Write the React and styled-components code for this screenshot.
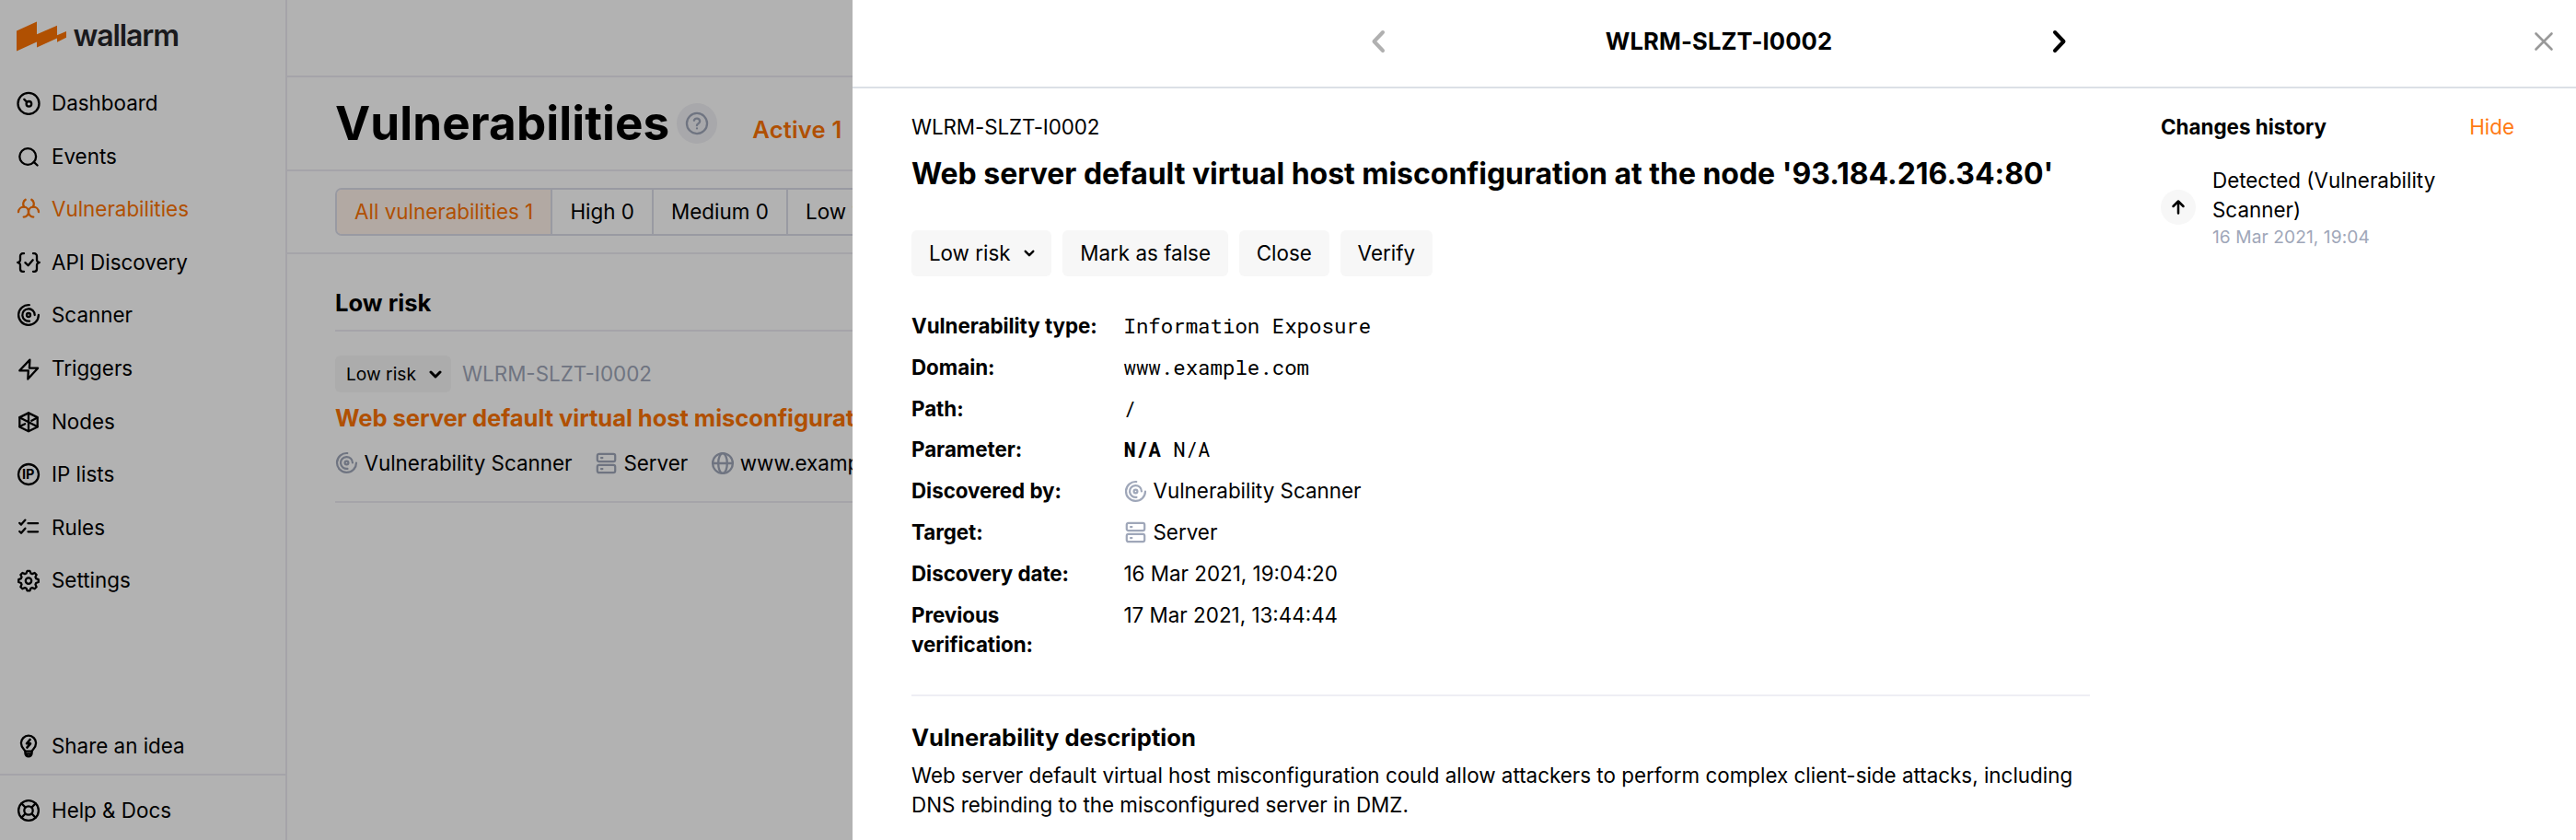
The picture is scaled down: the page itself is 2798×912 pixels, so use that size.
import React from "react";
import styled, { createGlobalStyle } from "styled-components";

const GlobalStyle = createGlobalStyle`
  *, *::before, *::after { box-sizing: border-box; }
  html, body { margin: 0; padding: 0; background: #fff; overflow: hidden; }
  body { font-family: Inter, "Liberation Sans", sans-serif; font-size: 22.4px; line-height: 32px; color: #000; }
  h1, h2, h3, p, dl, dt, dd { margin: 0; }
  button { font: inherit; color: inherit; border: 0; background: none; padding: 0; }
`;

const ORANGE = "#fc7303";
const MUTED = "#9fa7b9";
const LINE = "#ecebf3";

/* ---------- Icons ---------- */

const Svg = styled.svg`
  display: block;
  flex: none;
  width: ${(p) => p.$w || 26}px;
  height: ${(p) => p.$h || p.$w || 26}px;
  color: ${(p) => p.$color || "inherit"};
  fill: none;
  stroke: currentColor;
  stroke-width: ${(p) => p.$stroke || 2.3};
  stroke-linecap: round;
  stroke-linejoin: round;
`;

const BadgeText = styled.text`
  font: 700 14.5px Inter, sans-serif;
  fill: currentColor;
  stroke: none;
`;

const DashboardIcon = () => (
  <Svg viewBox="0 0 26 26">
    <circle cx="13" cy="13.4" r="11.5" />
    <circle cx="13.4" cy="13.8" r="2.8" />
    <path d="M8.3 8.9l2.8 2.8" />
  </Svg>
);
const SearchIcon = () => (
  <Svg viewBox="0 0 26 26">
    <circle cx="12.2" cy="13" r="8.9" />
    <path d="M18.7 18.9l3.9 3.6" />
  </Svg>
);
const BiohazardIcon = () => (
  <Svg viewBox="0 0 26 26">
    <path d="M9.7 2.8A5.5 5.5 0 0 0 8.2 10.6M16.3 2.8A5.5 5.5 0 0 1 17.8 10.6" />
    <path d="M2 16.2A5.8 5.8 0 0 1 7.8 10.7C10.8 10.7 13 13.2 13 16.2S15.500 21.600 18.300 21.600" />
    <path d="M24 16.2A5.8 5.8 0 0 0 18.2 10.7C15.2 10.7 13 13.2 13 16.2S10.500 21.600 7.700 21.600" />
  </Svg>
);
const ApiIcon = () => (
  <Svg viewBox="0 0 26 26">
    <path d="M8 3.2H6.8a2.8 2.8 0 0 0-2.8 2.8v4A2.9 2.9 0 0 1 1.2 13 2.9 2.9 0 0 1 4 16v4a2.8 2.8 0 0 0 2.8 2.8H8" />
    <path d="M18 3.2h1.2A2.8 2.8 0 0 1 22 6v4a2.9 2.9 0 0 0 2.8 3A2.9 2.9 0 0 0 22 16v4a2.8 2.8 0 0 1-2.8 2.8H18" />
    <path d="M9.4 13.1l3.2 3.2 5.1-6" />
  </Svg>
);
const ScannerIcon = ({ color, size }) => (
  <Svg viewBox="0 0 26 26" $color={color} $w={size}>
    <path d="M13.8 2.1A10.9 10.9 0 1 0 23.9 13" />
    <path d="M14 19.6A6.7 6.7 0 1 1 19.7 13" />
    <circle cx="13" cy="13" r="2" />
  </Svg>
);
const BoltIcon = () => (
  <Svg viewBox="0 0 26 26">
    <path d="M14.4 3.6L3.3 15.3H12.8L12.3 24.6 23.1 12.7H13.9Z" />
  </Svg>
);
const NodesIcon = () => (
  <Svg viewBox="0 0 26 26">
    <path d="M13 3.4l9.7 4.7v10.4L13 23.2l-9.7-4.7V8.1z" />
    <path d="M13 3.4v19.8M3.3 8.3l19.4 9.9M3.5 18.1l5.6-2.9M22.5 8.5l-6.2 3.2" />
  </Svg>
);
const IpIcon = () => (
  <Svg viewBox="0 0 26 26">
    <circle cx="13" cy="13" r="11" />
    <BadgeText x="5.9" y="18.3">IP</BadgeText>
  </Svg>
);
const RulesIcon = () => (
  <Svg viewBox="0 0 26 26">
    <path d="M12.5 8.2h10.6M12.5 17.3h10.6M3.2 7.9l1.8 1.7 4.4-5M3.2 17l1.8 1.7 4.4-5" />
  </Svg>
);

const gearPath = (() => {
  const pts = [];
  for (let i = 0; i < 8; i += 1) {
    const a = (i * Math.PI) / 4;
    [[-0.29, 8.5], [-0.13, 10.9], [0.13, 10.9], [0.29, 8.5]].forEach(([d, r]) => {
      pts.push(`${(13 + r * Math.sin(a + d)).toFixed(2)} ${(13.6 - r * Math.cos(a + d)).toFixed(2)}`);
    });
  }
  return `M${pts.join("L")}Z`;
})();
const SettingsIcon = () => (
  <Svg viewBox="0 0 26 26">
    <path d={gearPath} />
    <circle cx="13" cy="13.6" r="3.2" />
  </Svg>
);
const IdeaIcon = () => (
  <Svg viewBox="0 0 26 26">
    <path d="M9.4 18.6C8.8 16.8 4.9 14.8 4.9 9.8a8.1 8.1 0 0 1 16.2 0c0 5-3.9 7-4.5 8.8z" />
    <path d="M9.4 18.6v2.2a3.6 3.6 0 0 0 7.2 0v-2.2M10 21.5h6" />
    <path d="M14.6 6L11 10.3h4L11.4 14.6" strokeWidth="2.6" />
  </Svg>
);
const BuoyIcon = () => (
  <Svg viewBox="0 0 26 26">
    <circle cx="13" cy="13" r="10.9" />
    <circle cx="13" cy="13" r="4.7" />
    <path d="M5.3 5.3l4.3 4.3M16.4 9.6l4.3-4.3M16.4 16.4l4.3 4.3M9.6 16.4l-4.3 4.3" />
  </Svg>
);
const QuestionIcon = () => (
  <Svg viewBox="0 0 24 24" $w={26} $stroke={2.1} $color={MUTED}>
    <circle cx="12" cy="12" r="10.2" />
    <path d="M9.09 9a3 3 0 0 1 5.83 1c0 2-3 2.6-3 4M12 17h.01" />
  </Svg>
);
const ServerIcon = ({ size }) => (
  <Svg viewBox="0 0 26 26" $w={size} $color={MUTED}>
    <rect x="2.9" y="2.9" width="20.2" height="8.6" rx="2" />
    <rect x="2.9" y="15.5" width="20.2" height="8.6" rx="2" />
    <path d="M7.3 7.3h1.4M7.3 19.8h1.4" />
  </Svg>
);
const GlobeIcon = () => (
  <Svg viewBox="0 0 26 26" $w={26} $color={MUTED}>
    <circle cx="13" cy="13" r="10.9" />
    <ellipse cx="13" cy="13" rx="4.8" ry="10.9" />
    <path d="M2.1 13h21.8" />
  </Svg>
);
const ChevronDown = ({ w, h, stroke }) => (
  <Svg viewBox="0 0 14 9" $w={w} $h={h} $stroke={stroke}>
    <path d="M2 2l5 5 5-5" />
  </Svg>
);
const Chevron = ({ right }) => (
  <Svg viewBox="0 0 16 26" $w={16} $h={26} $stroke={4} $color={right ? "#000" : "#b0b0b0"}>
    <path d={right ? "M3 3l9.5 10L3 23" : "M13 3L3.5 13 13 23"} />
  </Svg>
);
const CloseIcon = () => (
  <Svg viewBox="0 0 22 22" $w={22} $stroke={2.6} $color="#999">
    <path d="M2.5 2.5l17 17M19.5 2.5l-17 17" />
  </Svg>
);
const ArrowUp = () => (
  <Svg viewBox="0 0 18 18" $w={18} $stroke={2.5}>
    <path d="M9 15.5V2.5M3.5 8L9 2.5 14.5 8" />
  </Svg>
);
const LogoMark = styled.svg`
  display: block;
  width: 54px;
  height: 33px;
  fill: ${ORANGE};
`;

/* ---------- Page frame ---------- */

const Page = styled.div`
  position: relative;
  display: flex;
  width: 2798px;
  height: 912px;
  overflow: hidden;
`;
const Backdrop = styled.div`
  position: absolute;
  inset: 0;
  display: flex;
  justify-content: flex-end;
  background: rgba(0, 0, 0, 0.3);
`;

/* ---------- Sidebar ---------- */

const Sidebar = styled.nav`
  display: flex;
  flex-direction: column;
  flex: none;
  width: 312px;
  border-right: 2px solid ${LINE};
`;
const Logo = styled.div`
  display: flex;
  gap: 7.5px;
  height: 83.2px;
  padding: 22.5px 0 0 18px;
`;
const LogoWord = styled.span`
  font-size: 32px;
  font-weight: 600;
  line-height: 32px;
  letter-spacing: -1.1px;
  color: #26262a;
`;
const NavItem = styled.a`
  display: flex;
  align-items: center;
  gap: 12px;
  flex: none;
  height: ${(p) => p.$h || 57.6}px;
  padding-left: 18px;
  color: ${(p) => (p.$active ? ORANGE : "#000")};
`;
const NavFooter = styled.div`
  margin-top: auto;
`;
const FooterCell = styled.div`
  display: flex;
  height: ${(p) => p.$h}px;
  border-top: ${(p) => (p.$line ? `2px solid ${LINE}` : "0")};
`;

/* ---------- Main list ---------- */

const Main = styled.main`
  display: flex;
  flex-direction: column;
  flex: none;
  width: 614px;
  overflow: hidden;
`;
const TopBar = styled.div`
  flex: none;
  height: 84px;
  border-bottom: 2px solid ${LINE};
`;
const TitleBar = styled.header`
  display: flex;
  align-items: center;
  flex: none;
  height: 102px;
  padding-left: 52px;
  border-bottom: 2px solid ${LINE};
  white-space: nowrap;
`;
const PageTitle = styled.h1`
  margin-bottom: 2px;
  font-size: 51.2px;
  line-height: 60px;
  font-weight: 700;
  letter-spacing: 0.1px;
`;
const HelpBadge = styled.span`
  display: grid;
  place-items: center;
  flex: none;
  width: 44px;
  height: 44px;
  margin-left: 8px;
  border-radius: 50%;
  background: #f1f1f5;
`;
const StatusTab = styled.span`
  margin: 13px 0 0 38px;
  font-size: 25.6px;
  font-weight: 600;
  letter-spacing: 0.15px;
  color: ${ORANGE};
`;
const FilterBar = styled.div`
  display: flex;
  align-items: center;
  flex: none;
  height: 90px;
  padding-left: 52px;
  border-bottom: 2px solid ${LINE};
`;
const Segments = styled.div`
  display: flex;
  flex: none;
  height: 52px;
  border: 2px solid #dbdde8;
  border-radius: 7px;
  overflow: hidden;
  white-space: nowrap;
`;
const Segment = styled.button`
  padding: 0 19.1px;
  border-right: 2px solid #dbdde8;
  color: ${(p) => (p.$active ? ORANGE : "#000")};
  background: ${(p) => (p.$active ? "#fff2ea" : "transparent")};
  &:last-child { border-right: 0; }
`;
const List = styled.section`
  padding: 36px 0 0 52px;
`;
const GroupTitle = styled.h2`
  height: 48px;
  font-size: 25.6px;
  line-height: 34px;
  font-weight: 700;
  border-bottom: 2px solid ${LINE};
`;
const Card = styled.article`
  display: flex;
  flex-direction: column;
  height: 186px;
  padding-top: 26px;
  border-bottom: 2px solid ${LINE};
`;
const CardTop = styled.div`
  display: flex;
  align-items: center;
  gap: 12px;
  color: ${MUTED};
`;
const RiskPill = styled.button`
  display: flex;
  align-items: center;
  gap: 14px;
  width: 126px;
  height: 40px;
  padding-left: 12px;
  border-radius: 6px;
  font-size: 19.2px;
  color: #000;
  background: #f6f6f6;
`;
const CardTitle = styled.h3`
  margin-top: 10px;
  font-size: 25.6px;
  line-height: 36px;
  font-weight: 700;
  letter-spacing: -0.07px;
  color: ${ORANGE};
  white-space: nowrap;
`;
const CardMeta = styled.div`
  display: flex;
  gap: 24.5px;
  margin-top: 14.5px;
  white-space: nowrap;
`;
const IconText = styled.span`
  display: flex;
  align-items: center;
  gap: ${(p) => p.$gap || 6.5}px;
`;

/* ---------- Drawer ---------- */

const Drawer = styled.aside`
  display: flex;
  flex-direction: column;
  width: 1872px;
  background: #fff;
`;
const DrawerHeader = styled.header`
  display: grid;
  grid-template-columns: 1fr 756px 1fr;
  align-items: center;
  flex: none;
  height: 96px;
  padding: 0 0 5px 10px;
  border-bottom: 2px solid #dbe0e6;
`;
const Pager = styled.div`
  display: flex;
  grid-column: 2;
  align-items: center;
  justify-content: space-between;
`;
const PagerTitle = styled.h2`
  padding-top: 1px;
  font-size: 25.6px;
  font-weight: 700;
  letter-spacing: 0.12px;
`;
const CloseButton = styled.button`
  justify-self: end;
  margin: 1px 24px 0 0;
`;
const DrawerBody = styled.div`
  display: flex;
  gap: 77px;
  padding: 26px 67px 0 64px;
`;
const Details = styled.div`
  flex: none;
  width: 1280px;
`;
const IssueId = styled.div`
  height: 32px;
  line-height: 32px;
  letter-spacing: -0.1px;
`;
const IssueTitle = styled.h1`
  margin-top: 15px;
  font-size: 32px;
  line-height: 40px;
  font-weight: 700;
  letter-spacing: -0.03px;
  white-space: nowrap;
`;
const Actions = styled.div`
  display: flex;
  gap: 12px;
  margin-top: 41px;
`;
const ActionButton = styled.button`
  display: flex;
  align-items: center;
  gap: 14px;
  height: 50px;
  padding: 0 18.9px 1px;
  border-radius: 6px;
  background: #f7f7f7;
`;
const Facts = styled.dl`
  display: grid;
  grid-template-columns: 230.5px 1fr;
  row-gap: 12.8px;
  margin-top: 38px;
`;
const FactName = styled.dt`
  max-width: 210px;
  font-weight: 700;
  letter-spacing: -0.05px;
`;
const FactValue = styled.dd`
  height: 32px;
  font-family: ${(p) => (p.$mono ? '"Roboto Mono", "DejaVu Sans Mono", monospace' : "inherit")};
`;
const Description = styled.section`
  margin-top: 38.4px;
  padding-top: 28px;
  border-top: 2px solid #eeeef4;
`;
const DescriptionTitle = styled.h2`
  font-size: 25.6px;
  line-height: 34px;
  font-weight: 700;
`;
const DescriptionText = styled.p`
  margin-top: 8px;
`;
const History = styled.div`
  flex: 1;
`;
const HistoryHead = styled.div`
  display: flex;
  justify-content: space-between;
`;
const HistoryTitle = styled.h2`
  font-size: 22.4px;
  line-height: 32px;
  font-weight: 700;
`;
const HideLink = styled.button`
  color: #ff7a14;
`;
const HistoryEntry = styled.div`
  display: flex;
  align-items: center;
  gap: 18px;
  margin-top: 26px;
`;
const EntryDot = styled.span`
  display: grid;
  place-items: center;
  flex: none;
  width: 38px;
  height: 38px;
  border-radius: 50%;
  background: #f7f7f7;
`;
const EntryDate = styled.div`
  height: 26px;
  font-size: 19.2px;
  line-height: 26px;
  letter-spacing: 0.06px;
  color: ${MUTED};
`;

const NAV = [
  ["Dashboard", DashboardIcon],
  ["Events", SearchIcon],
  ["Vulnerabilities", BiohazardIcon],
  ["API Discovery", ApiIcon],
  ["Scanner", ScannerIcon],
  ["Triggers", BoltIcon],
  ["Nodes", NodesIcon],
  ["IP lists", IpIcon],
  ["Rules", RulesIcon],
  ["Settings", SettingsIcon],
];

const FACTS = [
  ["Vulnerability type:", "Information Exposure", true],
  ["Domain:", "www.example.com", true],
  ["Path:", "/", true],
  ["Parameter:", <><b>N/A</b> N/A</>, true],
  ["Discovered by:", <IconText $gap={7}><ScannerIcon color={MUTED} size={25} />Vulnerability Scanner</IconText>],
  ["Target:", <IconText $gap={7}><ServerIcon size={25} />Server</IconText>],
  ["Discovery date:", "16 Mar 2021, 19:04:20"],
  ["Previous verification:", "17 Mar 2021, 13:44:44"],
];

export default function App() {
  return (
    <>
      <GlobalStyle />
      <Page>
        <Sidebar>
          <Logo>
            <LogoMark viewBox="0 0 54 33">
              <path d="M0 10.5L22 .5V14.3L44 4.8V15.2L54 11V17.8L44 22.8V18.5L22 28.5V22.5L0 32.5Z" />
            </LogoMark>
            <LogoWord>wallarm</LogoWord>
          </Logo>
          {NAV.map(([label, Icon]) => (
            <NavItem key={label} $active={label === "Vulnerabilities"}>
              <Icon />
              {label}
            </NavItem>
          ))}
          <NavFooter>
            <FooterCell $h={59}>
              <NavItem $h={57}><IdeaIcon />Share an idea</NavItem>
            </FooterCell>
            <FooterCell $h={72} $line>
              <NavItem $h={75}><BuoyIcon />Help &amp; Docs</NavItem>
            </FooterCell>
          </NavFooter>
        </Sidebar>

        <Main>
          <TopBar />
          <TitleBar>
            <PageTitle>Vulnerabilities</PageTitle>
            <HelpBadge><QuestionIcon /></HelpBadge>
            <StatusTab>Active 1</StatusTab>
          </TitleBar>
          <FilterBar>
            <Segments>
              <Segment $active>All vulnerabilities 1</Segment>
              <Segment>High 0</Segment>
              <Segment>Medium 0</Segment>
              <Segment>Low 1</Segment>
            </Segments>
          </FilterBar>
          <List>
            <GroupTitle>Low risk</GroupTitle>
            <Card>
              <CardTop>
                <RiskPill>Low risk <ChevronDown w={14} h={9} stroke={3} /></RiskPill>
                WLRM-SLZT-I0002
              </CardTop>
              <CardTitle>Web server default virtual host misconfiguration</CardTitle>
              <CardMeta>
                <IconText><ScannerIcon color={MUTED} size={25} />Vulnerability Scanner</IconText>
                <IconText><ServerIcon size={25} />Server</IconText>
                <IconText $gap={6}><GlobeIcon />www.example.com</IconText>
              </CardMeta>
            </Card>
          </List>
        </Main>

        <Backdrop>
          <Drawer>
            <DrawerHeader>
              <Pager>
                <Chevron />
                <PagerTitle>WLRM-SLZT-I0002</PagerTitle>
                <Chevron right />
              </Pager>
              <CloseButton><CloseIcon /></CloseButton>
            </DrawerHeader>
            <DrawerBody>
              <Details>
                <IssueId>WLRM-SLZT-I0002</IssueId>
                <IssueTitle>Web server default virtual host misconfiguration at the node '93.184.216.34:80'</IssueTitle>
                <Actions>
                  <ActionButton>Low risk <ChevronDown w={12} h={8} stroke={2.8} /></ActionButton>
                  <ActionButton>Mark as false</ActionButton>
                  <ActionButton>Close</ActionButton>
                  <ActionButton>Verify</ActionButton>
                </Actions>
                <Facts>
                  {FACTS.map(([name, value, mono]) => (
                    <React.Fragment key={name}>
                      <FactName>{name}</FactName>
                      <FactValue $mono={mono}>{value}</FactValue>
                    </React.Fragment>
                  ))}
                </Facts>
                <Description>
                  <DescriptionTitle>Vulnerability description</DescriptionTitle>
                  <DescriptionText>
                    Web server default virtual host misconfiguration could allow attackers to perform complex
                    client-side attacks, including DNS rebinding to the misconfigured server in DMZ.
                  </DescriptionText>
                </Description>
              </Details>
              <History>
                <HistoryHead>
                  <HistoryTitle>Changes history</HistoryTitle>
                  <HideLink>Hide</HideLink>
                </HistoryHead>
                <HistoryEntry>
                  <EntryDot><ArrowUp /></EntryDot>
                  <div>
                    Detected (Vulnerability Scanner)
                    <EntryDate>16 Mar 2021, 19:04</EntryDate>
                  </div>
                </HistoryEntry>
              </History>
            </DrawerBody>
          </Drawer>
        </Backdrop>
      </Page>
    </>
  );
}
